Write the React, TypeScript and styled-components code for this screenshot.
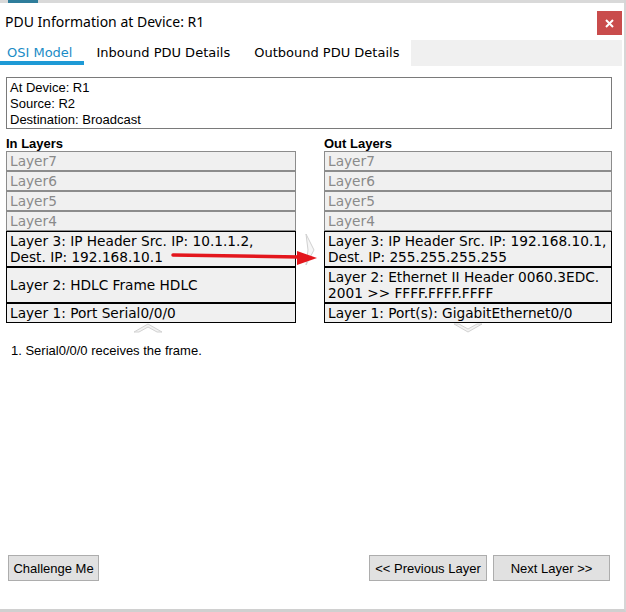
import React from "react";
import styled, { createGlobalStyle } from "styled-components";

const GlobalStyle = createGlobalStyle`
  html, body { margin: 0; padding: 0; background: #fff; }
  body { font-family: "Liberation Sans", Arial, sans-serif; color: #000; }
  * { box-sizing: border-box; }
`;

const Window = styled.div`
  width: 626px;
  height: 612px;
  display: flex;
  flex-direction: column;
  background: #fff;
  border-right: 2px solid #d6d6d6;
  border-bottom: 3px solid #d0d0d0;
  overflow: hidden;
`;

const TopStrip = styled.div`
  display: flex;
  height: 3px;
  flex-shrink: 0;
  background: #d9d9d9;
`;

const TopAccent = styled.div`
  margin-left: 8px;
  width: 30px;
  background: #2f7d9b;
`;

const TitleBar = styled.div`
  display: flex;
  align-items: flex-start;
  justify-content: space-between;
  height: 37px;
  flex-shrink: 0;
  padding: 0 2px 0 5px;
`;

const Title = styled.div`
  font-family: "Noto Sans", sans-serif;
  font-size: 14px;
  line-height: 20px;
  margin-top: 9px;
`;

const CloseButton = styled.div`
  width: 25px;
  height: 24px;
  margin-top: 8px;
  background: #c94c4c;
  display: flex;
  align-items: center;
  justify-content: center;
`;

const TabBar = styled.div`
  display: flex;
  height: 26px;
  flex-shrink: 0;
`;

const TabList = styled.div`
  display: flex;
  margin-left: -5px;
`;

const Tab = styled.div<{ $active?: boolean }>`
  height: 25px;
  padding: 5px 12px 0;
  line-height: 16px;
  font-family: "DejaVu Sans", Verdana, sans-serif;
  font-size: 13px;
  white-space: nowrap;
  color: ${(p) => (p.$active ? "#1b8cc6" : "#000")};
  border-bottom: 4px solid ${(p) => (p.$active ? "#1e9ad6" : "transparent")};
`;

const TabFiller = styled.div`
  flex: 1;
  margin-right: 2px;
  background: #f0f0f0;
`;

const Content = styled.div`
  flex: 1;
  display: flex;
  flex-direction: column;
  padding: 11px 12px 28px 6px;
`;

const InfoBox = styled.div`
  height: 52px;
  border: 1px solid #7a7a7a;
  padding: 2px 3px 0;
  font-size: 13px;
  line-height: 16px;
`;

const LayersGrid = styled.div`
  position: relative;
  display: grid;
  grid-template-columns: 290px 28px 288px;
`;

const Column = styled.div`
  display: flex;
  flex-direction: column;
`;

const ColumnHeader = styled.div`
  margin-top: 7px;
  height: 15px;
  line-height: 15px;
  font-size: 13px;
  font-weight: bold;
`;

const LayerBox = styled.div<{ $active?: boolean; $tall?: boolean }>`
  display: flex;
  align-items: center;
  height: ${(p) => (p.$tall ? 36 : 20)}px;
  padding: 0 0 0 3px;
  border: 1px solid ${(p) => (p.$active ? "#000" : "#8c8c8c")};
  background: #f0f0f0;
  color: ${(p) => (p.$active ? "#000" : "#8a8a8a")};
  font-family: "DejaVu Sans", Verdana, sans-serif;
  font-size: 13.7px;
  line-height: 16px;
  white-space: nowrap;
`;

const ChevronRow = styled.div<{ $shift?: number }>`
  display: flex;
  justify-content: center;
  height: 10px;
  padding-right: ${(p) => p.$shift ?? 0}px;
`;

const Gap = styled.div`
  display: flex;
  justify-content: center;
  padding-top: 104px;
`;

const ArrowLayer = styled.svg`
  position: absolute;
  left: 164px;
  top: 119px;
  width: 156px;
  height: 20px;
  pointer-events: none;
  overflow: visible;
`;

const Message = styled.div`
  margin-top: 10px;
  padding-left: 5px;
  font-size: 13px;
  line-height: 16px;
`;

const Footer = styled.div`
  margin-top: auto;
  display: flex;
  justify-content: space-between;
  padding: 0 2px;
`;

const ButtonGroup = styled.div`
  display: flex;
  gap: 6px;
`;

const Button = styled.button<{ $w: number }>`
  width: ${(p) => p.$w}px;
  height: 26px;
  padding: 0;
  border: 1px solid #adadad;
  background: #e1e1e1;
  font-family: "Liberation Sans", Arial, sans-serif;
  font-size: 13px;
  color: #000;
`;

const UpChevron = () => (
  <svg width="30" height="10" viewBox="0 0 30 10">
    <polygon points="1,9 15,1 29,9 24,9 15,4 6,9" fill="#f3f3f3" stroke="#d2d2d2" strokeWidth="1" />
  </svg>
);

const DownChevron = () => (
  <svg width="30" height="10" viewBox="0 0 30 10">
    <polygon points="1,1 15,9 29,1 24,1 15,6 6,1" fill="#f3f3f3" stroke="#d2d2d2" strokeWidth="1" />
  </svg>
);

const RightChevron = () => (
  <svg width="10" height="33" viewBox="0 0 10 33">
    <polygon points="1,1 9,17 1,32 3,17" fill="#f6f6f6" stroke="#d0d0d0" strokeWidth="1" />
  </svg>
);

export default function App() {
  return (
    <>
      <GlobalStyle />
      <Window>
        <TopStrip>
          <TopAccent />
        </TopStrip>
        <TitleBar>
          <Title>PDU Information at Device: R1</Title>
          <CloseButton>
            <svg width="9" height="9" viewBox="0 0 9 9">
              <path d="M1 1 L8 8 M8 1 L1 8" stroke="#fff" strokeWidth="2" />
            </svg>
          </CloseButton>
        </TitleBar>
        <TabBar>
          <TabList>
            <Tab $active>OSI Model</Tab>
            <Tab>Inbound PDU Details</Tab>
            <Tab>Outbound PDU Details</Tab>
          </TabList>
          <TabFiller />
        </TabBar>
        <Content>
          <InfoBox>
            <div>At Device: R1</div>
            <div>Source: R2</div>
            <div>Destination: Broadcast</div>
          </InfoBox>
          <LayersGrid>
            <Column>
              <ColumnHeader>In Layers</ColumnHeader>
              <LayerBox>Layer7</LayerBox>
              <LayerBox>Layer6</LayerBox>
              <LayerBox>Layer5</LayerBox>
              <LayerBox>Layer4</LayerBox>
              <LayerBox $active $tall>
                <div>
                  Layer 3: IP Header Src. IP: 10.1.1.2,
                  <br />
                  Dest. IP: 192.168.10.1
                </div>
              </LayerBox>
              <LayerBox $active $tall>Layer 2: HDLC Frame HDLC</LayerBox>
              <LayerBox $active>Layer 1: Port Serial0/0/0</LayerBox>
              <ChevronRow $shift={7}>
                <UpChevron />
              </ChevronRow>
            </Column>
            <Gap>
              <RightChevron />
            </Gap>
            <Column>
              <ColumnHeader>Out Layers</ColumnHeader>
              <LayerBox>Layer7</LayerBox>
              <LayerBox>Layer6</LayerBox>
              <LayerBox>Layer5</LayerBox>
              <LayerBox>Layer4</LayerBox>
              <LayerBox $active $tall>
                <div>
                  Layer 3: IP Header Src. IP: 192.168.10.1,
                  <br />
                  Dest. IP: 255.255.255.255
                </div>
              </LayerBox>
              <LayerBox $active $tall>
                <div>
                  Layer 2: Ethernet II Header 0060.3EDC.
                  <br />
                  2001 &gt;&gt; FFFF.FFFF.FFFF
                </div>
              </LayerBox>
              <LayerBox $active>Layer 1: Port(s): GigabitEthernet0/0</LayerBox>
              <ChevronRow>
                <DownChevron />
              </ChevronRow>
            </Column>
            <ArrowLayer viewBox="0 0 156 20">
              <path d="M3 7 L129 9" stroke="#e3161c" strokeWidth="3.5" strokeLinecap="round" />
              <polygon points="127,3 147,10 127,17" fill="#e3161c" />
            </ArrowLayer>
          </LayersGrid>
          <Message>1. Serial0/0/0 receives the frame.</Message>
          <Footer>
            <Button $w={91}>Challenge Me</Button>
            <ButtonGroup>
              <Button $w={118}>&lt;&lt; Previous Layer</Button>
              <Button $w={117}>Next Layer &gt;&gt;</Button>
            </ButtonGroup>
          </Footer>
        </Content>
      </Window>
    </>
  );
}
